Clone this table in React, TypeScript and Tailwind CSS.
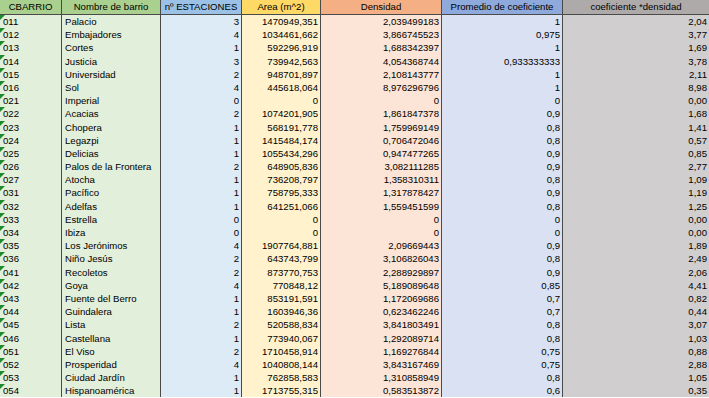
type Row = [string, string, string, string, string, string, string];

const ROWS: Row[] = [
  ["011", "Palacio", "3", "1470949,351", "2,039499183", "1", "2,04"],
  ["012", "Embajadores", "4", "1034461,662", "3,866745523", "0,975", "3,77"],
  ["013", "Cortes", "1", "592296,919", "1,688342397", "1", "1,69"],
  ["014", "Justicia", "3", "739942,563", "4,054368744", "0,933333333", "3,78"],
  ["015", "Universidad", "2", "948701,897", "2,108143777", "1", "2,11"],
  ["016", "Sol", "4", "445618,064", "8,976296796", "1", "8,98"],
  ["021", "Imperial", "0", "0", "0", "0", "0,00"],
  ["022", "Acacias", "2", "1074201,905", "1,861847378", "0,9", "1,68"],
  ["023", "Chopera", "1", "568191,778", "1,759969149", "0,8", "1,41"],
  ["024", "Legazpi", "1", "1415484,174", "0,706472046", "0,8", "0,57"],
  ["025", "Delicias", "1", "1055434,296", "0,947477265", "0,9", "0,85"],
  ["026", "Palos de la Frontera", "2", "648905,836", "3,082111285", "0,9", "2,77"],
  ["027", "Atocha", "1", "736208,797", "1,358310311", "0,8", "1,09"],
  ["031", "Pacífico", "1", "758795,333", "1,317878427", "0,9", "1,19"],
  ["032", "Adelfas", "1", "641251,066", "1,559451599", "0,8", "1,25"],
  ["033", "Estrella", "0", "0", "0", "0", "0,00"],
  ["034", "Ibiza", "0", "0", "0", "0", "0,00"],
  ["035", "Los Jerónimos", "4", "1907764,881", "2,09669443", "0,9", "1,89"],
  ["036", "Niño Jesús", "2", "643743,799", "3,106826043", "0,8", "2,49"],
  ["041", "Recoletos", "2", "873770,753", "2,288929897", "0,9", "2,06"],
  ["042", "Goya", "4", "770848,12", "5,189089648", "0,85", "4,41"],
  ["043", "Fuente del Berro", "1", "853191,591", "1,172069686", "0,7", "0,82"],
  ["044", "Guindalera", "1", "1603946,36", "0,623462246", "0,7", "0,44"],
  ["045", "Lista", "2", "520588,834", "3,841803491", "0,8", "3,07"],
  ["046", "Castellana", "1", "773940,067", "1,292089714", "0,8", "1,03"],
  ["051", "El Viso", "2", "1710458,914", "1,169276844", "0,75", "0,88"],
  ["052", "Prosperidad", "4", "1040808,144", "3,843167469", "0,75", "2,88"],
  ["053", "Ciudad Jardín", "1", "762858,583", "1,310858949", "0,8", "1,05"],
  ["054", "Hispanoamérica", "1", "1713755,315", "0,583513872", "0,6", "0,35"],
];

const HEADERS = [
  { label: "CBARRIO", bg: "bg-[#a9d08e]" },
  { label: "Nombre de barrio", bg: "bg-[#a9d08e]" },
  { label: "nº ESTACIONES", bg: "bg-[#9bc2e6]" },
  { label: "Area (m^2)", bg: "bg-[#ffd966]" },
  { label: "Densidad", bg: "bg-[#f4b084]" },
  { label: "Promedio de coeficiente", bg: "bg-[#8ea9db]" },
  { label: "coeficiente *densidad", bg: "bg-[#aeaaaa]" },
];

const BODY_BG = [
  "bg-[#e2efda]",
  "bg-[#e2efda]",
  "bg-[#ddebf7]",
  "bg-[#fff2cc]",
  "bg-[#fce4d6]",
  "bg-[#d9e1f2]",
  "bg-[#d0cece]",
];

export default function App() {
  return (
    <div className="w-[709px] h-[398px] overflow-hidden bg-white font-['Liberation_Sans',Arial,sans-serif] text-[9.6px] text-black">
      <div className="grid grid-cols-[62px_99px_81px_79px_121px_121px_146px]">
        {/* Header */}
        {HEADERS.map((h, i) => (
          <div
            key={h.label}
            className={`h-[15px] leading-[14px] text-center border-b border-r border-[#4a4a4a] whitespace-nowrap overflow-hidden ${h.bg} ${i === 6 ? "border-r-0" : ""}`}
          >
            {h.label}
          </div>
        ))}

        {/* Rows */}
        {ROWS.map((row) =>
          row.map((cell, i) => (
            <div
              key={row[0] + "-" + i}
              className={`relative h-[13.2px] leading-[13.2px] whitespace-nowrap overflow-hidden border-r border-[#4a4a4a] ${BODY_BG[i]} ${
                i < 2 ? "text-left pl-[3px]" : "text-right pr-[2px]"
              } ${i === 0 ? "pl-[1px]" : ""} ${i === 6 ? "border-r-0" : ""}`}
            >
              {i === 0 && (
                <span className="absolute left-0 top-0 w-0 h-0 border-t-[5px] border-r-[5px] border-t-[#1e8a2e] border-r-transparent" />
              )}
              {cell}
            </div>
          ))
        )}
      </div>
    </div>
  );
}
